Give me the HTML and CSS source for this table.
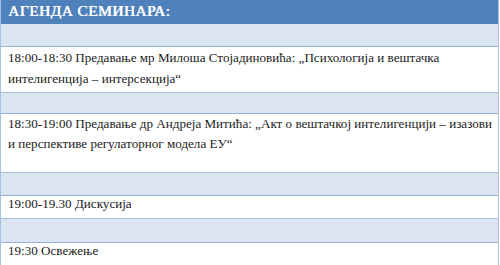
FILE: index.html
```html
<!DOCTYPE html>
<html lang="sr">
<head>
<meta charset="utf-8">
<link rel="stylesheet" href="styles.css">
</head>
<body>
<div class="agenda">
  <div class="row head">АГЕНДА СЕМИНАРА:</div>
  <div class="row band b1"></div>
  <div class="row item r1">
    <div class="ln">18:00-18:30 Предавање мр Милоша Стојадиновића: „Психологија и вештачка</div>
    <div class="ln">интелигенција – интерсекција“</div>
  </div>
  <div class="row band b2"></div>
  <div class="row item r2">
    <div class="ln">18:30-19:00 Предавање др Андреја Митића: „Акт о вештачкој интелигенцији – изазови</div>
    <div class="ln">и перспективе регулаторног модела ЕУ“</div>
  </div>
  <div class="row band b3"></div>
  <div class="row item r3"><div class="ln">19:00-19.30 Дискусија</div></div>
  <div class="row band b4"></div>
  <div class="row item r4"><div class="ln">19:30 Освежење</div></div>
</div>
</body>
</html>
```
FILE: styles.css
```css
html, body {
  margin: 0;
  padding: 0;
  background: #ffffff;
}
.agenda {
  width: 499px;
  height: 265px;
  overflow: hidden;
  border-left: 1px solid #a7bfde;
  border-right: 1px solid #a7bfde;
  box-sizing: border-box;
  display: flex;
  flex-direction: column;
}
.row {
  box-sizing: border-box;
  flex: none;
  padding: 0 7px;
  font-family: "Liberation Serif", "Times New Roman", serif;
  font-size: 13.1px;
  color: #1c1c1c;
}
.ln {
  white-space: nowrap;
}
.head {
  height: 24px;
  background: #4f81bd;
  color: #ffffff;
  font-size: 15.5px;
  letter-spacing: 0.4px;
  text-shadow: 0.6px 0 0 #ffffff;
  line-height: 21px;
  margin: 0 -1px;
  padding-left: 8px;
}
.band {
  background: #dbe5f1;
  border-bottom: 1px solid #95b3d7;
}
.item {
  background: #ffffff;
  border-bottom: 1px solid #a7bfde;
  line-height: 16px;
}
.b1 { height: 23px; }
.r1 { height: 46px; line-height: 21px; }
.b2 { height: 21px; }
.r2 { height: 59px; line-height: 20px; }
.b3 { height: 23px; }
.r3 { height: 23px; }
.b4 { height: 24px; }
.r4 { height: 30px; border-bottom: 0; }
```
